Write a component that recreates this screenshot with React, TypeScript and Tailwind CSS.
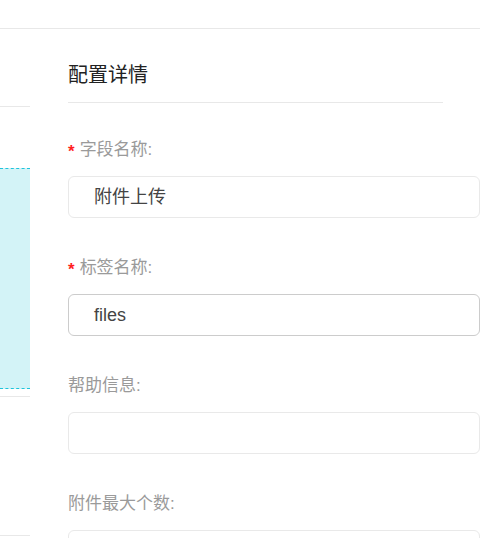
const fields = [
  { label: '字段名称:', required: true, value: '附件上传', active: false },
  { label: '标签名称:', required: true, value: 'files', active: true },
  { label: '帮助信息:', required: false, value: '', active: false },
  { label: '附件最大个数:', required: false, value: '', active: false },
];

export default function App() {
  return (
    <div className="h-[538px] w-[502px] overflow-hidden bg-white font-['Liberation_Sans','Noto_Sans_CJK_SC',sans-serif]">
      <div className="mt-[28px] flex w-[480px] border-t border-[#e8e8e8]">
        {/* Left canvas column */}
        <div className="w-[30px] shrink-0">
          <div className="h-[78px] border-b border-[#e8e8e8]" />
          <div className="mt-[61px] h-[221px] border-y border-dashed border-[#1fc4dc] bg-[#d3f3f7]" />
          <div className="mt-[7px] h-[140px] border-y border-[#e8e8e8]" />
        </div>

        {/* Config panel */}
        <div className="ml-[38px] flex-1">
          <div className="mt-[32px] w-[375px] border-b border-[#e8e8e8] pb-[13px] text-[20px] leading-[28px] text-[#222]">
            配置详情
          </div>

          <div className="mt-[35px] flex flex-col gap-[38px]">
            {fields.map((f) => (
              <div key={f.label}>
                <div className="flex h-[24px] items-center text-[17px] leading-[24px] text-[#9a9a9a]">
                  {f.required && (
                    <span className="relative top-[2px] mr-[5px] text-[17px] font-bold leading-[24px] text-[#ff1f1f]">*</span>
                  )}
                  {f.label}
                </div>
                <div
                  className={`mt-[14px] flex h-[42px] items-center rounded-[6px] border bg-white pl-[25px] text-[18px] text-[#444] ${
                    f.active ? 'border-[#cccccc]' : 'border-[#e9e9e9]'
                  }`}
                >
                  {f.value}
                </div>
              </div>
            ))}
          </div>
        </div>
      </div>
    </div>
  );
}
